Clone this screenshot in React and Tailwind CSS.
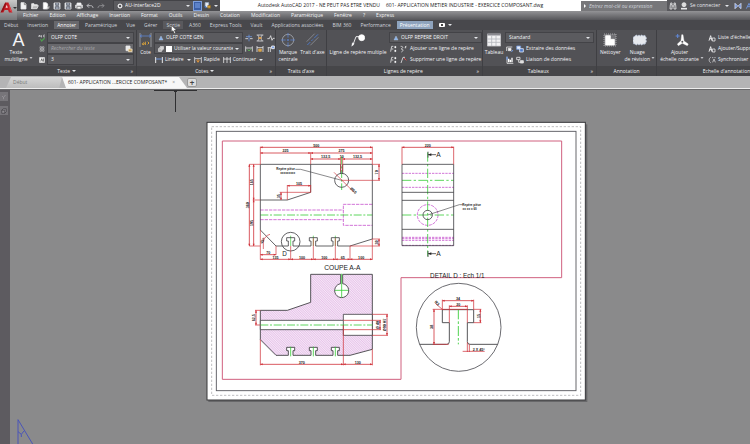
import React from 'react';

const menus = ['Fichier', 'Edition', 'Affichage', 'Insertion', 'Format', 'Outils', 'Dessin', 'Cotation', 'Modification', 'Paramétrique', 'Fenêtre', '?', 'Express'];
const tabs = ['Début', 'Insertion', 'Annoter', 'Paramétrique', 'Vue', 'Gérer', 'Sortie', 'A360', 'Express Tools', 'Vault', 'Applications associées', 'BIM 360', 'Performance', 'Présentation'];

/* ---------- icons ---------- */

function Icon({ className = 'size-[8px]', children, box = '0 0 24 24' }) {
  return (
    <svg viewBox={box} className={`${className} shrink-0`} fill="none" stroke="#e8e8ea" strokeWidth="2.4" aria-hidden="true">
      {children}
    </svg>
  );
}

const NewIcon = () => <Icon><path d="M3 2h10l5 5v14H3z" fill="#f2f2f2" /><path d="M13 2v6h6" stroke="#777" /></Icon>;
const OpenIcon = () => <Icon><path d="M2 20V5h7l2 3h8v3H7z" fill="#e8e8e8" /><path d="M2 20l5-9h15l-4 9z" fill="#bbb" /></Icon>;
const BlankIcon = () => <Icon><path d="M4 2h9l4 4v15H4z" fill="#fff" /><path d="M15 12l6 6M21 12v7h-7" stroke="#bbb" /></Icon>;
const SaveIcon = () => <Icon><path d="M3 3h18v18H3z" fill="#d6dae0" /><path d="M8 3v7h9V3M7 21v-7h11v7" stroke="#555a66" fill="#9aa2b0" /></Icon>;
const PrintIcon = () => <Icon><path d="M6 3h12v6H6z" fill="#fff" /><path d="M2 9h20v9H2z" fill="#c9c9cc" /><path d="M6 14h12v7H6z" fill="#fff" stroke="#777" /></Icon>;
const UndoIcon = () => <Icon><path d="M9 5L3 11l6 6M3 11h11c5 0 7 3 7 7" stroke="#b9b9bd" strokeWidth="3" /></Icon>;
const RedoIcon = () => <Icon><path d="M15 5l6 6-6 6M21 11H10c-5 0-7 3-7 7" stroke="#8c8c90" strokeWidth="3" /></Icon>;
const GearIcon = () => (
  <Icon className="size-[6px]">
    <circle cx="12" cy="12" r="7" strokeWidth="4" />
    <path d="M12 1v5M12 18v5M1 12h5M18 12h5M4 4l4 4M16 16l4 4M20 4l-4 4M8 16l-4 4" strokeWidth="3" />
  </Icon>
);
const ShareIcon = () => <Icon className="size-[7px]"><path d="M4 2h12v16H4z" fill="#e9edf5" stroke="#9fb0cc" /><path d="M13 12h9v9h-9z" fill="#e0a53a" stroke="#8d6a28" /><path d="M2 14l6 6" stroke="#3565b8" strokeWidth="4" /></Icon>;
const BinocularsIcon = () => <Icon><path d="M4 8h5v13H3zM15 8h5l1 13h-6zM9 12h6M5 8V3h4v5M15 8V3h4v5" /></Icon>;
const UserIcon = () => <Icon><circle cx="12" cy="8" r="6" fill="#ddd" /><path d="M3 20h18" strokeWidth="5" /></Icon>;
const ExchangeIcon = () => <Icon><path d="M3 4l8 8-8 8zM21 4l-8 8 8 8z" fill="#5a7fd0" stroke="#e3e9f8" /></Icon>;
const CloudIcon = () => <Icon><path d="M4 20l8-16 8 16M7 14h10" stroke="#6f93d8" strokeWidth="3" /></Icon>;
const SpellIcon = () => (
  <Icon>
    <path d="M2 9l2-6 2 6M9 3v6h3M9 6h3M21 3h-4v6h4" strokeWidth="1.8" />
    <path d="M7 15l4 6 9-9" stroke="#4e9b4e" strokeWidth="3.4" />
  </Icon>
);
const AlignIcon = () => <Icon className="h-[8px] w-[6px]"><path d="M4 3h6v7H4zM14 3h6v7h-6zM4 14h6v7H4zM14 14h6v7h-6z" strokeWidth="2" /></Icon>;
const HeightIcon = () => <Icon className="size-[6px]"><path d="M2 2h20v20H2z" fill="#f4f4f4" /><path d="M7 18l4-11 4 11M18 6v12" stroke="#333" /></Icon>;
const FindIcon = () => <Icon><path d="M3 3h12v14H3z" fill="#e9e9ea" /><path d="M10 12h11v8H10z" fill="#c9a45c" stroke="#efe2c6" /></Icon>;
const StyleIcon = () => <Icon className="size-[6px]"><path d="M12 4l8 16H4z" fill="#86aee6" stroke="#c9dcf7" strokeWidth="1.4" /></Icon>;
const LayersIcon = () => <Icon className="size-[6px]"><path d="M8 2h14v12M5 6h13v12M2 10h12v12H2z" fill="#bbb" /></Icon>;
const LinearIcon = () => <Icon><path d="M2 3v18M22 3v18" strokeWidth="3" /><path d="M3 9h18" stroke="#6f95da" strokeWidth="3" /></Icon>;
const QuickIcon = () => <Icon><path d="M2 3v18M22 3v18M3 8h18" stroke="#dcdce0" /><path d="M12 9v8M8 13l4 6 4-6" stroke="#d8903c" strokeWidth="3" /></Icon>;
const ContinueIcon = () => <Icon><path d="M2 3v18M12 3v18M22 3v18M2 9h20" /></Icon>;
const BreakIcon = () => <Icon><path d="M2 3h20M2 21h20M5 3c5 4 5 14 0 18M19 3c-5 4-5 14 0 18" stroke="#e0e0e2" /><path d="M8 12h8" stroke="#e8a13f" strokeWidth="5" /></Icon>;
const AdjustIcon = () => <Icon><path d="M3 3v18M21 3v18M3 8h18" /><path d="M8 12h8v7H8z" fill="#d6a24c" stroke="#d6a24c" /></Icon>;
const InspectIcon = () => <Icon><path d="M2 4v16M22 4v16M3 9h18" /><path d="M8 13l4 5 6-7" stroke="#5faf57" strokeWidth="3" /></Icon>;
const JogIcon = () => <Icon><path d="M1 14h6l4-9 4 14 3-6h5" /></Icon>;
const UpdateIcon = () => <Icon><path d="M2 8h12M4 8v13M10 8v13" /><path d="M14 3h8v8h-8z" fill="#6d94e0" stroke="#fff" /></Icon>;
const SpaceIcon = () => <Icon><path d="M12 2v20M3 8h18" stroke="#6f95da" /><path d="M1 14h8M15 14h8" /></Icon>;
const AddLeaderIcon = () => <Icon><path d="M10 4H5L2 20M5 12h5" /><path d="M14 4h4v5h-4zM14 15h4v5h-4z" fill="#fff" strokeWidth="1" /></Icon>;
const PlusLeaderIcon = () => <Icon><path d="M2 4c8 0 8 4 2 8 6 0 7 6 0 9M14 8l5-4M17 3v7" /></Icon>;
const MinusLeaderIcon = () => <Icon><path d="M3 21l6-17h6" /><path d="M12 6l7 7" stroke="#d44" strokeWidth="3" /></Icon>;
const ExtractIcon = () => <Icon><path d="M2 3h12v10H2z" fill="#e4ecf8" stroke="#6f95da" /><path d="M11 11h11v10H11z" fill="#4c78c8" stroke="#dfe8f8" /></Icon>;
const LinkIcon = () => <Icon><path d="M2 4h10v7H2zM8 11v8h5" /><path d="M13 14h9v7h-9z" fill="#ddd" /></Icon>;
const CellIcon = () => <Icon><path d="M2 18V6h17" /><path d="M7 10h8v7H7z" fill="#f3f3f3" /><path d="M16 21l5-6" stroke="#6f95da" strokeWidth="3" /></Icon>;
const BarsIcon = () => <Icon><path d="M3 2v20h19" /><path d="M8 19V8M13 19v-8M18 19V5" stroke="#fff" strokeWidth="4" /><path d="M3 2v9" stroke="#6f95da" strokeWidth="4" /></Icon>;
const ScaleIcon = () => <Icon><path d="M3 20l5-15 4 15M5 14h6" strokeWidth="3" /><path d="M13 12h8v9h-8z" /></Icon>;
const SyncIcon = () => <Icon><path d="M8 4C2 7 2 17 8 20M12 5h4M19 5h4M14 19l4-10 4 10" stroke="#cfcfd2" /></Icon>;

const BigDimIcon = () => (
  <Icon className="h-[14px] w-[13px]" box="0 0 39 42">
    <path d="M3 0v42M36 0v42" stroke="#cfd3da" strokeWidth="1.6" />
    <path d="M3 9h33M9 5L3 9l6 4M30 5l6 4-6 4" stroke="#5f85cf" />
    <path d="M10 32l4-3 2 4-4 3zM19 26v10M26 26l4 4-4 4" stroke="#d9a23a" strokeWidth="3" />
  </Icon>
);
const CenterMarkIcon = () => (
  <Icon className="size-[14px]" box="0 0 42 42">
    <circle cx="21" cy="21" r="17" stroke="#b8bcc4" strokeWidth="2" />
    <path d="M0 21h14M18 21h6M28 21h14M21 0v14M21 18v6M21 28v14" stroke="#5b83d0" />
  </Icon>
);
const CenterLineIcon = () => (
  <Icon className="h-[14px] w-[13px]" box="0 0 39 42">
    <path d="M2 26L26 2M13 37l24-24" stroke="#9ea1a8" strokeWidth="2" />
    <path d="M4 36l9-9M16 24l5-5M24 16L36 4" stroke="#4f78c4" strokeWidth="3" />
  </Icon>
);
const BigLeaderIcon = () => (
  <Icon className="h-[14px] w-[14px]" box="0 0 42 42">
    <path d="M5 38L15 11h13" strokeWidth="3" />
    <path d="M2 40l2-11 6 3z" fill="#fff" strokeWidth="1" />
    <circle cx="32" cy="14" r="9" fill="#fff" stroke="#fff" />
  </Icon>
);
const TableIcon = () => (
  <Icon className="size-[14px]" box="0 0 42 42">
    <path d="M1 3h40v36H1z" fill="#f2f2f3" stroke="#c8c8cc" />
    <path d="M1 5h40" stroke="#8a8a90" strokeWidth="5" />
    <path d="M1 18h40M1 28h40M14 8v31M27 8v31" stroke="#b3b5bb" />
  </Icon>
);
const WipeoutIcon = () => (
  <Icon className="size-[14px]" box="0 0 42 42">
    <path d="M3 3h36v36H3z" stroke="#b9b9bd" strokeDasharray="3 3" fill="#727276" />
    <path d="M8 8h14v11h12v17H8z" fill="#fff" stroke="#fff" />
  </Icon>
);
const RevCloudIcon = () => (
  <Icon className="size-[14px]" box="0 -2 42 42">
    <path d="M6 7q4-6 8 0 4-6 8 0 4-6 8 0 6-5 8 2 5 5 0 9 5 5 0 9 0 7-8 4-4 6-8 0-4 6-8 0-4 6-8 0-7 1-5-5-4-5 0-9-4-6 5-10z" fill="#e6e9ee" stroke="#aeb9cf" strokeWidth="2" />
  </Icon>
);
const AddScaleIcon = () => (
  <Icon className="size-[14px]" box="0 0 42 42">
    <path d="M20 5h4l3 19 13 9-3 5-15-7-12 7-3-5 11-10z" fill="#fff" stroke="#fff" strokeWidth="1" />
    <circle cx="22" cy="26" r="3" fill="#515155" stroke="none" />
    <path d="M8 3v12M2 9h12" stroke="#6089da" strokeWidth="3" />
  </Icon>
);

/* ---------- ribbon pieces ---------- */

function Caret({ className = '' }) {
  return <span aria-hidden="true" className={`inline-block size-0 shrink-0 border-x-2 border-t-2 border-x-transparent border-t-gray-200 ${className}`} />;
}

function Combo({ label, value, icon, className = '' }) {
  return (
    <label className={`flex h-[9px] items-center gap-[2px] bg-[#5b5b5f] px-[3px] outline outline-[#434347] ${className}`}>
      <span className="sr-only">{label}</span>
      {icon}
      <select className="h-[9px] min-w-0 flex-1 appearance-none bg-transparent leading-[9px] text-gray-100 outline-none">
        <option>{value}</option>
      </select>
      <Caret />
    </label>
  );
}

function Tool({ children, label, more }) {
  return (
    <button type="button" aria-label={label} className="flex h-[9px] shrink-0 items-center gap-[2px] whitespace-nowrap">
      {children}
      {more && <Caret className="ml-[1px]" />}
    </button>
  );
}

function BigTool({ icon, lines, more, className = '' }) {
  return (
    <button type="button" className={`flex shrink-0 flex-col items-center gap-[2px] whitespace-nowrap ${className}`}>
      {icon}
      <span className="flex items-end gap-[1px]">
        <span className="leading-[7px]">{lines.map((l) => <span key={l} className="block">{l}</span>)}</span>
        {more && <Caret className="mb-[4px] scale-75" />}
      </span>
    </button>
  );
}

function Panel({ title, more, launcher, className = '', children }) {
  return (
    <section className={`flex flex-col border-r border-[#3f3f43] ${className}`}>
      <div className="flex h-[36px] gap-[4px] px-[3px] pt-[3px]">{children}</div>
      <footer className="flex h-[10px] items-center bg-[#464649] px-[3px]">
        <span className="flex flex-1 items-center justify-center gap-[2px] whitespace-nowrap">{title}{more && <Caret />}</span>
        {launcher && <button type="button" aria-label={`Options ${title}`}>»</button>}
      </footer>
    </section>
  );
}

/* ---------- drawing ---------- */

const RED = '#cf3038';

function Label({ x, y, children, rotate, size = 11, color = '#222' }) {
  return (
    <text x={x} y={y} fontSize={size} fill={color} textAnchor="middle" fontWeight="bold" transform={rotate ? `rotate(${rotate} ${x} ${y})` : undefined}>
      {children}
    </text>
  );
}

function DimH({ x1, x2, y, children, at }) {
  return (
    <g>
      <path d={`M${x1} ${y}H${x2}`} stroke={RED} strokeWidth="2.4" />
      <path d={`M${x1} ${y}l7-3v6zM${x2} ${y}l-7-3v6z`} fill={RED} />
      <Label x={at ?? (x1 + x2) / 2} y={y - 2}>{children}</Label>
    </g>
  );
}

function DimV({ y1, y2, x, children }) {
  return (
    <g>
      <path d={`M${x} ${y1}V${y2}`} stroke={RED} strokeWidth="2.4" />
      <path d={`M${x} ${y1}l-3 7h6zM${x} ${y2}l-3-7h6z`} fill={RED} />
      <Label x={x - 2} y={(y1 + y2) / 2} rotate={-90}>{children}</Label>
    </g>
  );
}

const slot = (x) => `H${x - 7}V378h-5V368h24v10h-5V393`;
const profile = `M181 345L228 393${slot(272)}${slot(340)}${slot(406)}H450L517 372`;

function FrontView() {
  return (
    <g>
      <path d="M181 285H430M181 314H430M517 268H430V331H517" stroke="#c040c8" strokeWidth="2.2" strokeDasharray="10 3" />
      <path d="M181 300H517M425 125V225" stroke="#35cc35" strokeWidth="2.4" strokeDasharray="24 5 6 5" />
      <path d="M272 362V393M340 362V393M406 362V393" stroke="#35cc35" strokeWidth="2" />
      <g stroke="#3c3c40" strokeWidth="2.4">
        <path d="M181 148H422V176M428 176V148H517V372M181 148V345M332 148V232L262 255H181" />
        <path d={profile} />
        <circle cx="425" cy="196" r="21" />
        <circle cx="272" cy="380" r="28" />
        <path d="M286 163h16L425 196" strokeWidth="1.8" />
      </g>
      <g stroke={RED} strokeWidth="2">
        <path d="M181 95V148M517 95V148M332 112V148M422 128V170M428 128V170M262 210V255M332 210V232M239 232H332M148 148H181M148 393H181M158 255H181M181 345V434M228 393V420M517 372V434M450 393V434M272 393V434M340 370V434M406 370V434M517 148H540M425 196H540M517 372H540M450 393H540" />
        <path d="M402 172L462 232M190 380q4-18 20-22M190 402V368" />
      </g>
      <DimH x1={181} x2={517} y={97}>500</DimH>
      <DimH x1={181} x2={332} y={114}>225</DimH>
      <DimH x1={332} x2={517} y={114}>275</DimH>
      <DimH x1={332} x2={422} y={132}>132,5</DimH>
      <Label x={425} y={130}>10</Label>
      <DimH x1={428} x2={517} y={132}>132,5</DimH>
      <DimH x1={262} x2={332} y={212}>105</DimH>
      <DimV y1={232} y2={255} x={243}>35</DimV>
      <DimV y1={148} y2={393} x={148}>360</DimV>
      <DimV y1={148} y2={255} x={161}>165</DimV>
      <DimV y1={255} y2={393} x={161}>195</DimV>
      <DimV y1={148} y2={196} x={537}>70</DimV>
      <DimV y1={372} y2={393} x={537}>30</DimV>
      <DimH x1={181} x2={228} y={419}>70</DimH>
      <DimH x1={181} x2={272} y={433}>135</DimH>
      <DimH x1={272} x2={340} y={433}>100</DimH>
      <DimH x1={340} x2={406} y={433}>100</DimH>
      <DimH x1={406} x2={450} y={433}>65</DimH>
      <DimH x1={450} x2={517} y={433}>100</DimH>
      <Label x={457} y={229} rotate={45} size={12}>Ø60</Label>
      <Label x={191} y={380} rotate={-60} size={11}>45°</Label>
      <Label x={257} y={165} size={9}>Repère pièce</Label>
      <Label x={263} y={178} size={9}>xxxxxxxxx</Label>
      <text x="247" y="422" fontSize="19" fill="#222">D</text>
    </g>
  );
}

function SideView() {
  return (
    <g transform="translate(570 0)">
      <path d="M36 175H191M36 217H191M36 367H191M36 371H191M36 376H191M36 391H191" stroke="#c040c8" strokeWidth="2.2" strokeDasharray="7 3" />
      <circle cx="113" cy="300" r="31" stroke="#c040c8" strokeWidth="2.2" strokeDasharray="9 3" />
      <path d="M36 196H191M36 300H191M113 112V424" stroke="#35cc35" strokeWidth="2.4" strokeDasharray="28 7 7 7" />
      <g stroke="#3c3c40" strokeWidth="2.4">
        <path d="M36 148H191V392H36ZM36 232H191M36 256H191M36 343H191" />
        <circle cx="113" cy="300" r="14" />
        <path d="M113 300L208 269H218" strokeWidth="1.8" />
        <path d="M114 110V128M114 119H138M114 408V426M114 416H138" />
      </g>
      <path d="M114 119l10-4v8zM114 416l10-4v8z" fill="#222" />
      <path d="M36 95V148M191 95V148" stroke={RED} strokeWidth="2.2" />
      <DimH x1={36} x2={191} y={97}>220</DimH>
      <text x="139" y="126" fontSize="20" fill="#222">A</text>
      <text x="139" y="424" fontSize="20" fill="#222">A</text>
      <Label x={245} y={272} size={9}>Repère pièce</Label>
      <Label x={239} y={285} size={9}>xx xx x 60</Label>
    </g>
  );
}

const section = 'M181 166H262L332 142V58H422V86A21 21 0 1 0 428 86V58H517V283L450 301H413V287h5V277h-24v10h5V301H347V287h5V277h-24v10h5V301H279V287h5V277h-24v10h5V301H228L181 254Z';

function SectionView() {
  return (
    <g transform="translate(0 420)">
      <defs>
        <pattern id="hatch" width="5" height="5" patternUnits="userSpaceOnUse" patternTransform="rotate(-45)">
          <rect width="5" height="5" fill="#f6eaf7" />
          <path d="M0 0V5" stroke="#d694da" strokeWidth="2.4" />
        </pattern>
      </defs>
      <text x="427" y="46" fontSize="20" fill="#222" textAnchor="middle">COUPE A-A</text>
      <path d={section} fill="url(#hatch)" stroke="#3c3c40" strokeWidth="2.6" />
      <path d="M181 196H430V178H517V241H430V224H181Z" fill="#fff" stroke="#3c3c40" strokeWidth="2.4" />
      <path d="M430 196V224" stroke="#3c3c40" strokeWidth="2.4" />
      <path d="M181 210H517" stroke="#35cc35" strokeWidth="2.4" strokeDasharray="24 5 6 5" />
      <path d="M425 56V128M405 106H445M272 275V304M340 275V304M406 275V304" stroke="#35cc35" strokeWidth="2.4" />
      <path d="M181 254V331M430 210V331M517 283V331M165 166H181M165 210H181M517 178H564M517 241H564M430 196H543M430 224H543" stroke={RED} strokeWidth="2.2" />
      <DimH x1={181} x2={430} y={328}>370</DimH>
      <DimH x1={430} x2={517} y={328}>130</DimH>
      <DimV y1={166} y2={210} x={168}>62,5</DimV>
      <DimV y1={196} y2={224} x={540}>Ø 40</DimV>
      <DimV y1={178} y2={241} x={561}>Ø90 H7</DimV>
    </g>
  );
}

function DetailView() {
  return (
    <g transform="translate(570 420)">
      <ellipse cx="206" cy="217" rx="127" ry="132" stroke="#55555a" strokeWidth="2.6" />
      <path d="M89 268H170Q178 268 178 260V203H157V164H251V203H232V260Q232 268 240 268H323" stroke="#3c3c40" strokeWidth="2.6" />
      <path d="M205 163V268" stroke="#35cc35" strokeWidth="2.6" strokeDasharray="30 6 8 6" />
      <path d="M157 134V164M251 134V164M178 151V203M232 151V203M128 163H232M128 268H176M251 163H274M251 203H274M232 262V291M238 268V291M218 289H284M136 145L159 165" stroke={RED} strokeWidth="2.2" />
      <DimH x1={157} x2={251} y={137}>34</DimH>
      <DimH x1={178} x2={232} y={154}>20</DimH>
      <DimV y1={163} y2={268} x={132}>38</DimV>
      <DimV y1={163} y2={203} x={271}>15</DimV>
      <Label x={138} y={147} rotate={45} size={12}>R3</Label>
      <Label x={266} y={287}>2 X 45°</Label>
      <text x="202" y="70" fontSize="19" fill="#222" textAnchor="middle">DETAIL D : Ech 1/1</text>
    </g>
  );
}

function Sheet() {
  return (
    <svg viewBox="0 0 1170 870" className="absolute top-[25px] left-[190px] h-[290px] w-[390px] font-['Liberation_Sans',sans-serif]" fill="none" role="img" aria-label="Présentation du composant">
      <rect x="25" y="28" width="1137" height="833" fill="#68686a" />
      <rect x="21" y="22" width="1135" height="833" fill="#fff" stroke="#38383b" strokeWidth="3" />
      <rect x="35" y="35" width="1107" height="806" stroke="#aeaeb2" strokeWidth="2.4" strokeDasharray="7 5" />
      <rect x="49" y="49" width="1079" height="778" stroke="#5c5c62" strokeWidth="2.8" />
      <path d="M67 78H1085V488H603V793H67Z" stroke="#d0607f" strokeWidth="3" />
      <FrontView />
      <SideView />
      <SectionView />
      <DetailView />
    </svg>
  );
}

/* ---------- page ---------- */

function TitleBar() {
  return (
    <div className="flex h-[11px] items-center bg-white text-[#222]">
      <div className="flex h-full items-center bg-[#4c4c50] text-gray-100">
        <div className="flex w-[97px] items-center gap-[3px] pl-[3px]">
          {[['Nouveau', NewIcon], ['Ouvrir', OpenIcon], ['Modèle', BlankIcon], ['Enregistrer', SaveIcon], ['Enregistrer sous', SaveIcon], ['Tracer', PrintIcon], ['Annuler', UndoIcon], ['Rétablir', RedoIcon]].map(([n, I]) => (
            <button key={n} type="button" aria-label={n}><I /></button>
          ))}
        </div>
        <Combo label="Espace de travail" value="AU-interface2D" icon={<GearIcon />} className="w-[79px]" />
        <button type="button" aria-label="Publier" className="h-[10px] w-[9px] border border-[#7fa0dc] bg-[#3b5fa6] p-[1px]"><span className="block size-[5px] bg-[#5d82c8]" /></button>
        <button type="button" aria-label="Partager" className="flex w-[18px] items-center gap-[3px] pl-[2px]"><ShareIcon /><Caret /></button>
      </div>
      <h1 className="flex flex-1 justify-center gap-[6px] whitespace-nowrap">
        <span>Autodesk AutoCAD 2017 - NE PEUT PAS ETRE VENDU</span>
        <span>601- APPLICATION METIER INDUSTRIE - EXERCICE COMPOSANT.dwg</span>
      </h1>
      <label className="flex h-[10px] w-[86px] items-center gap-[3px] bg-[#77777a] pl-[3px]">
        <span aria-hidden="true" className="inline-block size-0 border-y-2 border-l-2 border-y-transparent border-l-white" />
        <span className="sr-only">Recherche</span>
        <input className="h-[10px] min-w-0 flex-1 bg-transparent leading-[10px] italic outline-none placeholder:text-gray-300" placeholder="Entrez mot-clé ou expression" />
      </label>
      <div className="flex h-full w-[83px] items-center gap-[3px] bg-[#59595d] pl-[2px] text-gray-200">
        <button type="button" aria-label="Rechercher"><BinocularsIcon /></button>
        <button type="button" className="flex items-center gap-[2px] whitespace-nowrap"><UserIcon />Se connecter</button>
        <Caret className="mx-[2px]" />
        <button type="button" aria-label="Exchange"><ExchangeIcon /></button>
        <button type="button" aria-label="A360"><CloudIcon /></button>
      </div>
    </div>
  );
}

function Ribbon() {
  return (
    <div className="flex overflow-hidden bg-[#525256] text-gray-100">
      <Panel title="Texte" more launcher className="w-[137px] shrink-0">
        <BigTool className="w-[31px]" icon={<span className="font-['Liberation_Sans',sans-serif] text-[18px] leading-[14px]">A</span>} lines={['Texte', 'multiligne']} more />
        <div className="grid flex-1 grid-cols-[8px_1fr] items-center justify-items-center gap-x-[2px] gap-y-[2px] self-start">
          <SpellIcon /><Combo label="Style de texte" value="OLFP COTE" className="w-full" />
          <AlignIcon />
          <label className="flex h-[9px] w-full items-center bg-[#68686c] pl-[3px] outline outline-[#434347]">
            <span className="sr-only">Rechercher du texte</span>
            <input className="h-[9px] w-0 flex-1 bg-transparent leading-[9px] italic outline-none placeholder:text-[#a9a9ad]" placeholder="Rechercher du texte" />
            <FindIcon />
          </label>
          <HeightIcon /><Combo label="Hauteur de texte" value="3" className="w-full" />
        </div>
      </Panel>
      <Panel title="Cotes" more launcher className="w-[139px] shrink-0">
        <BigTool className="w-[11px]" icon={<BigDimIcon />} lines={['Cote']} />
        <div className="flex flex-col gap-[2px]">
          <div className="flex gap-[3px]">
            <Combo label="Style de cote" value="OLFP COTE GEN" icon={<StyleIcon />} className="w-[87px]" />
            <Tool label="Coupure"><SpaceIcon /></Tool><Tool label="Ajuster l'espace"><BreakIcon /></Tool><Tool label="Raccourci"><JogIcon /></Tool>
          </div>
          <div className="flex gap-[3px]">
            <Combo label="Calque de cote" value="Utiliser la valeur courante" icon={<><LayersIcon /><span className="size-[6px] bg-white" /></>} className="w-[87px]" />
            <Tool label="Inspecter"><InspectIcon /></Tool><Tool label="Espacement"><AdjustIcon /></Tool><Tool label="Mettre à jour"><UpdateIcon /></Tool>
          </div>
          <div className="flex gap-[3px]">
            <Tool more><LinearIcon />Linéaire</Tool>
            <Tool><QuickIcon />Rapide</Tool>
            <Tool more><ContinueIcon />Continuer</Tool>
          </div>
        </div>
      </Panel>
      <Panel title="Traits d'axe" className="w-[51px] shrink-0">
        <BigTool className="w-[18px]" icon={<CenterMarkIcon />} lines={['Marque', 'centrale']} />
        <BigTool className="w-[23px]" icon={<CenterLineIcon />} lines={["Trait d'axe"]} />
      </Panel>
      <Panel title="Lignes de repère" launcher className="w-[156px] shrink-0">
        <BigTool className="w-[56px]" icon={<BigLeaderIcon />} lines={['Ligne de repère multiple']} />
        <div className="flex flex-1 flex-col gap-[2px]">
          <Combo label="Style de ligne de repère" value="OLFP REPERE DROIT" icon={<StyleIcon />} className="w-full" />
          <Tool><AddLeaderIcon /><PlusLeaderIcon />Ajouter une ligne de repère</Tool>
          <Tool><AddLeaderIcon /><MinusLeaderIcon />Supprimer une ligne de repère</Tool>
        </div>
      </Panel>
      <Panel title="Tableaux" launcher className="w-[114px] shrink-0">
        <BigTool className="w-[16px]" icon={<TableIcon />} lines={['Tableau']} />
        <div className="flex flex-1 flex-col gap-[2px]">
          <Combo label="Style de tableau" value="Standard" className="w-full" />
          <Tool><CellIcon /><ExtractIcon />Extraire des données</Tool>
          <Tool><BarsIcon /><LinkIcon />Liaison de données</Tool>
        </div>
      </Panel>
      <Panel title="Annotation" className="w-[60px] shrink-0">
        <BigTool icon={<WipeoutIcon />} lines={['Nettoyer']} />
        <BigTool icon={<RevCloudIcon />} lines={['Nuage', 'de révision']} more />
      </Panel>
      <Panel title="Echelle d'annotation" className="min-w-[140px] flex-1">
        <BigTool className="w-[44px]" icon={<AddScaleIcon />} lines={['Ajouter', 'échelle courante']} more />
        <div className="flex flex-col gap-[2px]">
          <Tool><ScaleIcon />Liste d'échelles</Tool>
          <Tool><ScaleIcon />Ajouter/Supprimer</Tool>
          <Tool><SyncIcon />Synchroniser</Tool>
        </div>
      </Panel>
    </div>
  );
}

export default function App() {
  return (
    <div className="relative flex min-h-screen flex-col overflow-hidden bg-[#8a8a8b] font-['Open_Sans',sans-serif] text-[5px] leading-[7px]">
      <header className="bg-[#48484c]">
        <div className="flex bg-[#5c5c60]">
          <button type="button" aria-label="Menu de l'application" className="flex h-[20px] w-[17px] shrink-0 items-center bg-linear-to-b from-[#c9c9c9] to-[#77777a] pb-[5px]">
            <svg viewBox="0 0 42 36" className="h-[13px] w-[13px]" aria-hidden="true">
              <path d="M2 34L17 2h10l13 32H29l-3-8H15l-4 8z" fill="#c41e26" />
              <path d="M18 19l4-10 3 10z" fill="#f3e3e3" />
              <path d="M2 34L17 2l3 4L10 30z" fill="#8e1118" />
              <path d="M27 2l13 32-8-6z" fill="#e2444a" />
            </svg>
            <span className="inline-block size-0 border-x-2 border-t-2 border-x-transparent border-t-[#333]" />
          </button>
          <div className="min-w-0 flex-1">
            <TitleBar />
            <nav aria-label="Menus" className="flex h-[9px] items-center gap-[11px] bg-linear-to-b from-[#939396] to-[#56565a] pl-[6px] text-gray-100">
              {menus.map((m) => <button key={m} type="button">{m}</button>)}
            </nav>
          </div>
        </div>
        <nav aria-label="Ruban" className="flex h-[10px] items-center gap-[3px] pl-[1px] text-gray-300">
          {tabs.map((t) => (
            <button
              key={t}
              type="button"
              className={`h-[8px] px-[3px] whitespace-nowrap ${t === 'Annoter' ? 'bg-[#68686c] text-white' : ''} ${t === 'Sortie' ? 'bg-[#59595d]' : ''} ${t === 'Présentation' ? 'bg-[#8ea3bd] text-white' : ''}`}
            >
              {t}
            </button>
          ))}
          <button type="button" aria-label="Affichage du ruban" className="ml-[3px] flex items-center gap-[3px]">
            <span className="flex h-[4px] w-[6px] items-center justify-center rounded-[1px] bg-white"><span className="size-[2px] bg-[#444]" /></span>
            <Caret />
          </button>
        </nav>
        <Ribbon />
      </header>

      <div role="tablist" aria-label="Dessins" className="flex h-[13px] items-end border-b border-[#ededed] bg-[#b4b4b5] pt-[1px] pl-[6px]">
        <button type="button" role="tab" aria-selected="false" className="h-[11px] w-[56px] bg-linear-to-b from-[#d6d6d6] to-[#bdbdbd] pl-[7px] text-left text-[#777] [clip-path:polygon(5px_0,100%_0,95%_100%,0_100%)]">Début</button>
        <button type="button" role="tab" aria-selected="true" className="flex h-[11px] w-[125px] items-center bg-[#f7f7f7] pl-[6px] text-left whitespace-nowrap text-[#222] [clip-path:polygon(0_0,117px_0,100%_100%,4px_100%)]">
          601- APPLICATION ...ERCICE COMPOSANT*
          <span className="ml-[5px] text-[#888]">×</span>
        </button>
        <button type="button" aria-label="Nouveau dessin" className="mb-[1px] flex h-[9px] w-[10px] items-center justify-center rounded-[2px] border border-[#999] bg-[#dcdcdc] text-[8px] leading-none font-bold text-[#444]">+</button>
      </div>

      <main className="flex flex-1 border-t border-[#6a6a6c]">
        <aside className="flex w-[10px] flex-col gap-[5px] bg-[#5d5b60] pt-[2px]">
          <button type="button" aria-label="Navigation" className="h-[9px] w-[8px] bg-[#77757a] p-[1px]"><Icon className="size-[6px]"><path d="M4 8l6 6 8-10M10 14v7" stroke="#a5a3a8" /></Icon></button>
          <button type="button" aria-label="Vues" className="h-[9px] w-[8px] bg-[#77757a] p-[1px]"><Icon className="size-[6px]"><path d="M3 9h12v12H3zM3 9l6-6h12v12l-6 6" stroke="#39383c" fill="#8d8b90" /></Icon></button>
        </aside>
        <div className="relative min-h-[354px] flex-1 overflow-hidden">
          <Sheet />
          <svg viewBox="0 0 44 22" className="absolute top-0 left-[144px] h-[22px] w-[44px]" fill="none" stroke="#2f2f31" aria-hidden="true">
            <path d="M0 .5H43M21.5 0V22" />
            <path d="M20 0h3v2h-3z" fill="#2f2f31" stroke="none" />
          </svg>
          <svg viewBox="0 0 48 75" className="absolute bottom-0 left-[7px] h-[25px] w-[16px]" fill="none" stroke="#4a55b8" strokeWidth="3" aria-hidden="true">
            <path d="M3 75V2L47 75M3 38l10 8 8-10M13 46v8" />
          </svg>
        </div>
      </main>

      <svg viewBox="0 0 18 27" className="pointer-events-none absolute top-[25px] left-[171px] h-[9px] w-[6px]" aria-hidden="true">
        <path d="M1 1v20l5-4 4 9 4-2-4-8h7z" fill="#fff" stroke="#222" strokeWidth="1.5" />
      </svg>
    </div>
  );
}
